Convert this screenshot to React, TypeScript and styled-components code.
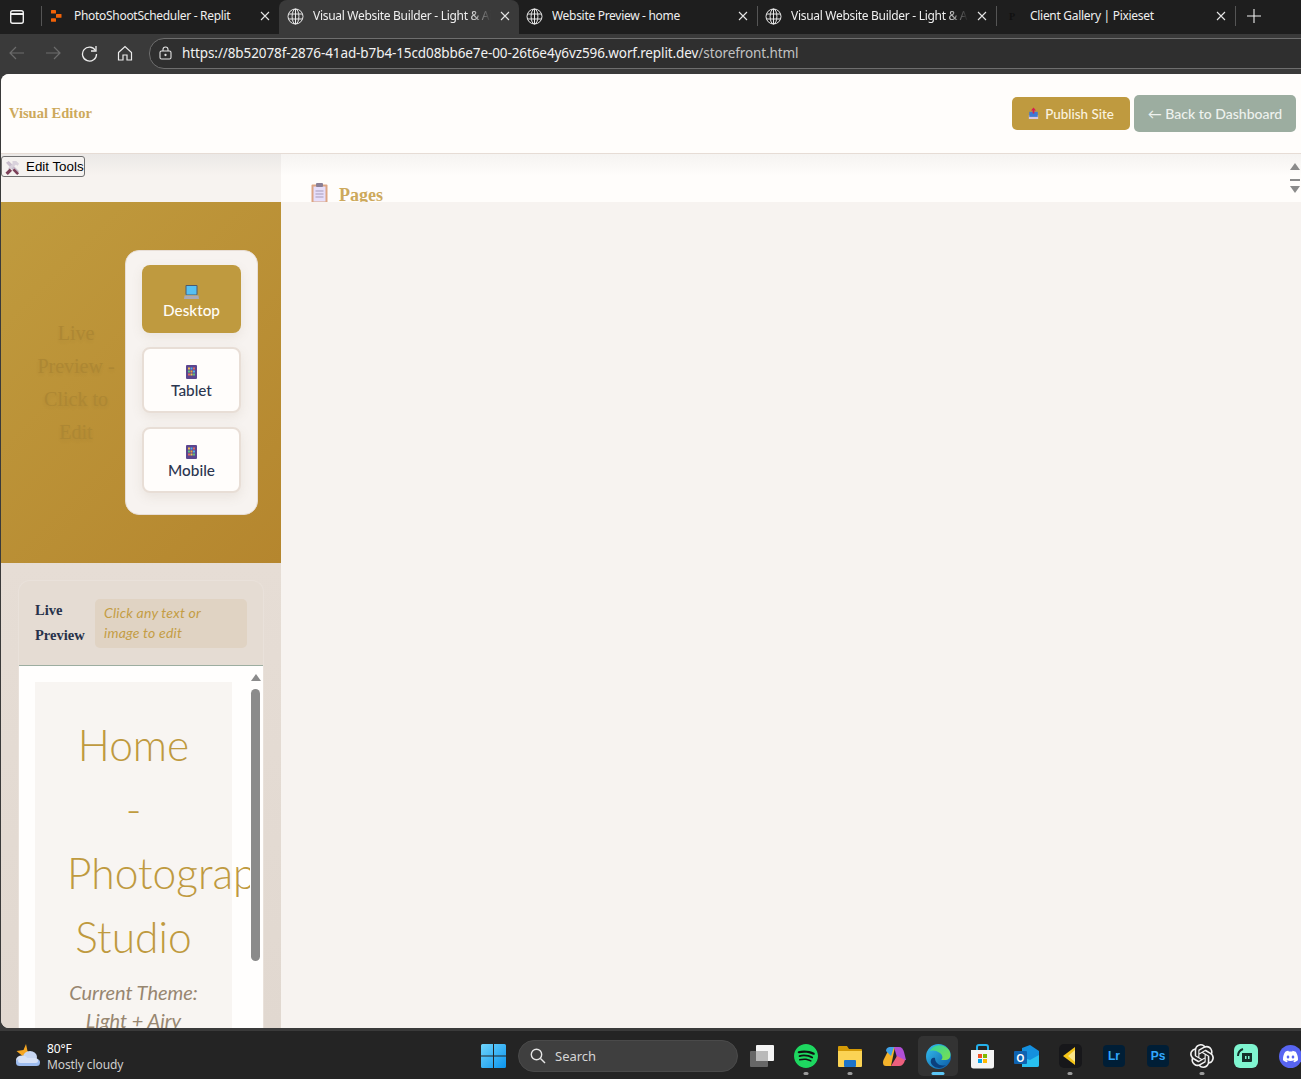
import React from "react";
import styled, { createGlobalStyle } from "styled-components";
import { SiSpotify, SiDiscord, SiOpenai } from "react-icons/si";

const GlobalStyle = createGlobalStyle`
  * { box-sizing: border-box; }
  html, body { margin: 0; padding: 0; height: 100%; overflow: hidden; background: #3a3a3a; }
  body { font-family: "Liberation Sans", Arial, sans-serif; }
`;

const UI_FONT = `"Noto Sans", "Open Sans", sans-serif`;
const SOFT_FONT = `Lato, "Open Sans", sans-serif`;
const SERIF_FONT = `"Liberation Serif", serif`;

const Screen = styled.div`
  width: 1301px;
  height: 1079px;
  display: flex;
  flex-direction: column;
  overflow: hidden;
`;

/* browser chrome */
const TabStrip = styled.div`
  height: 34px;
  background: #1e1e1e;
  display: flex;
  align-items: stretch;
  padding-left: 8px;
  color: #f0f0f0;
  flex-shrink: 0;
`;

const SidebarToggle = styled.div`
  width: 33px;
  display: flex;
  align-items: center;
  justify-content: flex-start;
`;

const TabSep = styled.span<{ $lead?: boolean }>`
  width: 1px;
  height: 20px;
  align-self: center;
  margin: -2px ${(p) => (p.$lead ? -1 : 0)}px 0 0;
  background: #555;
  flex-shrink: 0;
`;

const Tab = styled.div<{ $active?: boolean }>`
  width: ${(p) => (p.$active ? 240 : 238)}px;
  height: 34px;
  padding: 0 9px 2px ${(p) => (p.$active ? 7 : 6)}px;
  display: flex;
  align-items: center;
  gap: 9px;
  flex-shrink: 0;
  border-radius: 8px 8px 0 0;
  background: ${(p) => (p.$active ? "#3a3a3a" : "transparent")};
`;

const TabIcon = styled.span`
  width: 18px;
  height: 18px;
  display: flex;
  align-items: center;
  justify-content: center;
  flex-shrink: 0;
`;

const TabTitle = styled.span<{ $fade?: boolean }>`
  flex: 1;
  min-width: 0;
  font: 400 12px/16px ${UI_FONT};
  letter-spacing: -0.3px;
  white-space: nowrap;
  overflow: hidden;
  color: #efefef;
  ${(p) =>
    p.$fade &&
    `-webkit-mask-image: linear-gradient(90deg, #000 88%, transparent 100%);
     mask-image: linear-gradient(90deg, #000 88%, transparent 100%);`}
`;

const PixiesetMark = styled.span`
  color: #111;
  font: 700 10px ${SERIF_FONT};
`;

const NewTab = styled.div`
  width: 36px;
  padding-bottom: 2px;
  display: flex;
  align-items: center;
  justify-content: center;
`;

const Toolbar = styled.div`
  height: 40px;
  background: #3a3a3a;
  display: flex;
  align-items: center;
  padding: 0 0 2px 0;
  flex-shrink: 0;
`;

const NavSlot = styled.div`
  width: 36px;
  height: 30px;
  margin-left: ${(p) => (p.$first ? -1 : 0)}px;
  display: flex;
  align-items: center;
  justify-content: center;
` as any;

const AddressBar = styled.div`
  flex: 1;
  height: 31px;
  margin: 0 -30px 0 6px;
  border: 1px solid #6e6e6e;
  border-radius: 15px;
  background: #2f2f2f;
  display: flex;
  align-items: center;
  gap: 10px;
  padding-left: 9px;
`;

const Url = styled.span`
  font: 400 13.5px/18px ${UI_FONT};
  letter-spacing: -0.1px;
  color: #f2f2f2;
  white-space: nowrap;
`;

const UrlPath = styled.span`
  color: #c2c2c2;
`;

/* page */
const Page = styled.div`
  height: 954px;
  margin-left: 1px;
  border-radius: 8px 0 0 8px;
  overflow: hidden;
  background: #f7f3f0;
  display: flex;
  flex-direction: column;
  flex-shrink: 0;
`;

const Header = styled.header`
  height: 80px;
  background: #fffdfb;
  border-bottom: 1px solid #e6dcd5;
  display: flex;
  align-items: center;
  justify-content: space-between;
  padding: 0 5px 0 8px;
  flex-shrink: 0;
`;

const Brand = styled.div`
  font: 700 14.5px/20px ${SERIF_FONT};
  color: #cda95c;
  margin-top: -2px;
`;

const HeaderActions = styled.div`
  display: flex;
  align-items: center;
  gap: 4px;
`;

const ActionButton = styled.div<{ $tone: "gold" | "sage" }>`
  height: ${(p) => (p.$tone === "gold" ? 33 : 37)}px;
  width: ${(p) => (p.$tone === "gold" ? 118 : 162)}px;
  border-radius: 5px;
  background: ${(p) => (p.$tone === "gold" ? "#bf9a3f" : "#9cada0")};
  color: ${(p) => (p.$tone === "gold" ? "#fbf3df" : "#eef2ee")};
  font: 500 ${(p) => (p.$tone === "gold" ? 13.4 : 14)}px/18px ${SOFT_FONT};
  display: flex;
  align-items: center;
  justify-content: center;
  gap: 6px;
  white-space: nowrap;
`;

const Workspace = styled.div`
  flex: 1;
  min-height: 0;
  display: flex;
`;

const Sidebar = styled.aside`
  width: 280px;
  display: flex;
  flex-direction: column;
  flex-shrink: 0;
`;

const ToolStrip = styled.div`
  height: 48px;
  flex-shrink: 0;
  padding-top: 2px;
  background: linear-gradient(180deg, #ebe8e6 0%, #f7f3f0 45%);
`;

const ToolButton = styled.div`
  width: 84px;
  height: 21px;
  border: 1px solid #6f6f6f;
  border-radius: 3px;
  background: #f5f2f0;
  color: #000;
  font: 400 13.33px/20px "Liberation Sans", Arial, sans-serif;
  display: flex;
  align-items: center;
  gap: 6px;
  padding: 1px 0 0 3px;
  white-space: nowrap;
`;

const GoldSection = styled.section`
  height: 361px;
  flex-shrink: 0;
  background: linear-gradient(135deg, #c09b3e 0%, #b5862e 100%);
  display: flex;
  align-items: center;
  padding-left: 30px;
`;

const GhostTitle = styled.div`
  width: 90px;
  margin-right: 4px;
  font: 400 20px/33px ${SERIF_FONT};
  text-align: center;
  color: #ad8733;
  text-shadow: 0 2px 4px rgba(0, 0, 0, 0.06);
`;

const DevicePanel = styled.div`
  width: 133px;
  height: 265px;
  padding: 14px 16px 0;
  background: #f7f3f0;
  border: 1px solid #e8ded6;
  border-radius: 14px;
  display: flex;
  flex-direction: column;
  gap: 14px;
`;

const DeviceButton = styled.div<{ $active?: boolean }>`
  height: ${(p) => (p.$active ? 68 : 66)}px;
  padding-top: 4px;
  border-radius: 8px;
  border: ${(p) => (p.$active ? "none" : "2px solid #e8ded6")};
  background: ${(p) => (p.$active ? "#bf9a3f" : "#fffdfb")};
  color: ${(p) => (p.$active ? "#fffdf8" : "#2c3650")};
  box-shadow: 0 4px 12px rgba(120, 100, 70, 0.1);
  font: 500 15.3px/18px ${SOFT_FONT};
  display: flex;
  flex-direction: column;
  align-items: center;
  justify-content: center;
  gap: ${(p) => (p.$active ? 1 : 2)}px;
`;

const PreviewSection = styled.section`
  flex: 1;
  min-height: 0;
  padding: 17px 17px 0;
  background: linear-gradient(180deg, #e6ddd5 0%, #e1d8d0 100%);
`;

const PreviewCard = styled.div`
  height: 100%;
  border-radius: 12px 12px 0 0;
  background: #e5dcd3;
  border: 1px solid #e9e1da;
  border-bottom: none;
  display: flex;
  flex-direction: column;
  overflow: hidden;
`;

const PreviewHeader = styled.div`
  height: 85px;
  flex-shrink: 0;
  border-bottom: 1px solid #9cada0;
  display: flex;
  align-items: flex-start;
  gap: 9px;
  padding: 17px 16px 0 16px;
`;

const PreviewLabel = styled.div`
  width: 51px;
  font: 700 14.5px/25px ${SERIF_FONT};
  color: #27324a;
`;

const PreviewNote = styled.div`
  width: 152px;
  height: 49px;
  margin-top: 1px;
  padding: 4px 30px 0 9px;
  background: #e0d3c3;
  border-radius: 5px;
  font: italic 400 14px/20px ${SOFT_FONT};
  letter-spacing: 0.2px;
  color: #c49d45;
`;

const Viewport = styled.div`
  flex: 1;
  min-height: 0;
  display: flex;
  background: #fffefd;
`;

const ViewportContent = styled.div`
  width: 231px;
  padding: 16px 0 0 16px;
  overflow: hidden;
  flex-shrink: 0;
`;

const Canvas = styled.div`
  width: 197px;
  min-height: 400px;
  padding: 31px 32px 0;
  background: #f8f5f2;
  text-align: center;
`;

const HeroTitle = styled.h1`
  margin: 0 0 9px;
  font: 300 42.5px/64px ${SOFT_FONT};
  color: #bf9a3f;
`;

const ThemeLine = styled.p`
  margin: 0 -20px;
  font: italic 400 20px/28px ${SOFT_FONT};
  color: #978670;
`;

const Scrollbar = styled.div`
  width: 13px;
  padding: 8px 0 0 1px;
  display: flex;
  flex-direction: column;
  align-items: flex-start;
  gap: 8px;
`;

const Thumb = styled.div`
  width: 9px;
  height: 272px;
  border-radius: 5px;
  background: #8b8b8b;
`;

const Main = styled.main`
  flex: 1;
  min-width: 0;
`;

const MainStrip = styled.div`
  height: 48px;
  overflow: hidden;
  background: linear-gradient(180deg, #f5f3f1 0%, #fffdfb 45%);
  display: flex;
  justify-content: space-between;
  padding: 29px 1px 0 30px;
`;

const SectionTitle = styled.h2`
  margin: 0;
  display: flex;
  align-items: flex-start;
  gap: 11px;
  font: 700 18px/24px ${SERIF_FONT};
  color: #cda95c;
`;

const StripScroll = styled.div`
  margin-top: -20px;
  width: 10px;
  height: 30px;
  display: flex;
  flex-direction: column;
  align-items: center;
  justify-content: space-between;
`;

const Dash = styled.span`
  width: 10px;
  height: 2px;
  margin-top: 3px;
  background: #8b8b8b;
`;

/* windows taskbar */
const Taskbar = styled.footer`
  height: 51px;
  padding-top: 2px;
  border-top: 3px solid #3a3a3a;
  background: #242424;
  display: flex;
  align-items: center;
  flex-shrink: 0;
  overflow: hidden;
`;

const Weather = styled.div`
  width: 471px;
  flex-shrink: 0;
  display: flex;
  align-items: center;
  gap: 7px;
  padding-left: 15px;
  color: #fff;
`;

const WeatherText = styled.div`
  padding-top: 2px;
  font: 400 12px/16px ${UI_FONT};
  letter-spacing: -0.1px;
`;

const WeatherSub = styled.small`
  display: block;
  font-size: 12px;
  color: #cfcfcf;
`;

const StartSlot = styled.div`
  width: 47px;
  padding-right: 2px;
  display: flex;
  justify-content: center;
  flex-shrink: 0;
`;

const SearchBox = styled.div`
  width: 220px;
  height: 32px;
  flex-shrink: 0;
  border-radius: 16px;
  background: #3f3f3f;
  border: 1px solid #4a4a4a;
  display: flex;
  align-items: center;
  gap: 9px;
  padding-left: 11px;
  font: 400 13px/16px ${UI_FONT};
  color: #d5d5d5;
`;

const TaskIcons = styled.div`
  display: flex;
  flex-shrink: 0;
  margin-left: 2px;
`;

const TaskIcon = styled.div<{ $active?: boolean }>`
  width: 44px;
  height: 46px;
  display: flex;
  align-items: center;
  justify-content: center;
  position: relative;
  flex-shrink: 0;
  &::before {
    content: "";
    position: absolute;
    left: 2px;
    right: 2px;
    top: 3px;
    bottom: 3px;
    border-radius: 5px;
    background: ${(p) => (p.$active ? "#333" : "transparent")};
  }
  > * { position: relative; }
`;

const RunDot = styled.span<{ $active?: boolean }>`
  position: absolute !important;
  left: 50%;
  bottom: 4px;
  transform: translateX(-50%);
  width: ${(p) => (p.$active ? 13 : 5)}px;
  height: 3px;
  border-radius: 2px;
  background: ${(p) => (p.$active ? "#5cc6f5" : "#9a9a9a")};
`;

const GlobeIcon = () => (
  <svg width="17" height="17" viewBox="0 0 17 17" fill="none" stroke="#e8e8e8" strokeWidth="1">
    <circle cx="8.5" cy="8.5" r="7.5" />
    <ellipse cx="8.5" cy="8.5" rx="3.4" ry="7.5" />
    <path d="M1.5 6h14M1.5 11h14M8.5 1v15" />
  </svg>
);

const CloseIcon = () => (
  <svg width="10" height="10" viewBox="0 0 10 10" stroke="#e5e5e5" strokeWidth="1.1" style={{ flexShrink: 0 }}>
    <path d="M1 1l8 8M9 1l-8 8" />
  </svg>
);

const ReplitIcon = () => (
  <svg width="11" height="12" viewBox="0 0 11 12" fill="#f26207">
    <rect x="0" y="0" width="5" height="3.6" rx="0.6" />
    <rect x="5" y="4" width="5.5" height="3.8" rx="0.6" />
    <rect x="0" y="8.2" width="5" height="3.6" rx="0.6" />
  </svg>
);

const ToolsEmoji = () => (
  <svg width="15" height="15" viewBox="0 0 16 16" style={{ flexShrink: 0 }}>
    <path d="M1 3l3-2 11 11-3 3z" fill="#c8bdcc" />
    <path d="M8 1h4l3 3-1.500 2-2-1L5 11 3 9l5-5z" fill="#d9d2dc" />
    <path d="M5 9l2.500 2.500L3 16l-2.500-2.500z" fill="#7b3f57" />
    <path d="M10 9l5 5-2 2-5-5z" fill="#7b3f57" />
  </svg>
);

const ClipboardEmoji = () => (
  <svg width="17" height="20" viewBox="0 0 17 20" style={{ flexShrink: 0 }}>
    <rect x="0.500" y="1.500" width="16" height="18" rx="1" fill="#dda583" />
    <rect x="2.500" y="3.500" width="12" height="15" fill="#e6defa" />
    <rect x="5" y="0" width="7" height="4" rx="1" fill="#8a7f95" />
    <path d="M4.500 8h8M4.500 11h8M4.500 14h8" stroke="#a79bb8" strokeWidth="1" />
  </svg>
);

const UploadEmoji = () => (
  <svg width="11" height="13" viewBox="0 0 13 14" style={{ flexShrink: 0 }}>
    <rect x="1" y="9" width="11" height="4.500" fill="#d8c8e0" />
    <rect x="1.500" y="5" width="10" height="6" fill="#3f79d4" />
    <path d="M6.500 0l3 3.500H7.500V7h-2V3.500H3.500z" fill="#d81e4f" />
  </svg>
);

const LaptopEmoji = () => (
  <svg width="15" height="16" viewBox="0 0 15 16" style={{ flexShrink: 0 }}>
    <rect x="1.500" y="1" width="12" height="10" rx="1" fill="#4a5a70" />
    <rect x="2.500" y="2" width="10" height="8.500" fill="#56c0f2" />
    <path d="M0.500 11.500h14l.5 3.500H0z" fill="#a8aab8" />
  </svg>
);

const PhoneEmoji = () => (
  <svg width="11" height="14" viewBox="0 0 11 14" style={{ flexShrink: 0 }}>
    <rect width="11" height="14" rx="1" fill="#5b4690" />
    <rect x="2" y="2.500" width="2" height="2" fill="#f2c14e" />
    <rect x="4.500" y="2.500" width="2" height="2" fill="#4fb3e8" />
    <rect x="7" y="2.500" width="2" height="2" fill="#e46a5f" />
    <rect x="2" y="5.500" width="2" height="2" fill="#5fc27e" />
    <rect x="4.500" y="5.500" width="2" height="2" fill="#f2a33c" />
    <rect x="7" y="5.500" width="2" height="2" fill="#4fb3e8" />
    <rect x="2" y="8.500" width="2" height="2" fill="#e46a5f" />
    <rect x="4.500" y="8.500" width="2" height="2" fill="#f2c14e" />
    <rect x="7" y="8.500" width="2" height="2" fill="#5fc27e" />
  </svg>
);

const Arrow = ({ down }: { down?: boolean }) => (
  <svg width="10" height="7" viewBox="0 0 10 7" fill="#8b8b8b" style={{ flexShrink: 0 }}>
    <path d={down ? "M0 0h10L5 7z" : "M5 0l5 7H0z"} />
  </svg>
);

const WeatherIcon = () => (
  <svg width="25" height="26" viewBox="0 0 25 26">
    <path d="M11 1l1.500 7 4 3-9 2-6-5 7-1z" fill="#f5a623" />
    <ellipse cx="15" cy="14" rx="7" ry="6" fill="#c7d6f2" />
    <ellipse cx="7" cy="17" rx="6" ry="4.500" fill="#d7e2f7" />
    <rect x="1" y="16" width="24" height="7" rx="3.500" fill="#9dbcef" />
    <rect x="3" y="15" width="20" height="5" rx="2.500" fill="#d7e2f7" />
  </svg>
);

const WinLogo = () => (
  <svg width="25" height="24" viewBox="0 0 25 24">
    <defs>
      <linearGradient id="win" x1="0" y1="0" x2="1" y2="1">
        <stop offset="0" stopColor="#6fd4fb" />
        <stop offset="1" stopColor="#0a94ee" />
      </linearGradient>
    </defs>
    <path d="M0 1.500A1.500 1.500 0 0 1 1.500 0H12v11.500H0zM13 0h10.500A1.500 1.500 0 0 1 25 1.500v10H13zM0 12.500h12V24H1.500A1.500 1.500 0 0 1 0 22.500zM13 12.500h12v10a1.500 1.500 0 0 1-1.500 1.500H13z" fill="url(#win)" />
  </svg>
);

const TaskView = () => (
  <svg width="24" height="22" viewBox="0 0 24 22">
    <rect x="6" y="0" width="18" height="16" rx="1" fill="#f4f4f4" />
    <rect x="0" y="6" width="18" height="16" rx="1" fill="#6e6e6e" fillOpacity="0.92" />
    <rect x="6" y="6" width="12" height="10" fill="#b9b9b9" />
  </svg>
);

const Folder = () => (
  <svg width="24" height="22" viewBox="0 0 24 22">
    <path d="M0 2a1 1 0 0 1 1-1h8l2 3h12a1 1 0 0 1 1 1v3H0z" fill="#d49a06" />
    <path d="M0 6h24v15a1 1 0 0 1-1 1H1a1 1 0 0 1-1-1z" fill="#fbd354" />
    <rect x="6" y="15" width="12" height="7" rx="1" fill="#1d74c9" />
  </svg>
);

const Copilot = () => (
  <svg width="23" height="23" viewBox="0 0 23 23">
    <path d="M7 2h5L8 21H3C0 21-0.500 18 0.500 15z" fill="#f4b32b" />
    <path d="M3 6C3 3 5 2 7 2h4l-3 9z" fill="#3fa2e8" />
    <path d="M11 2h5c3 0 4 2 5 5l2 8-8 1z" fill="#b04fd6" />
    <path d="M8 21h8c3 0 5-2 6-6l-8-4z" fill="#ec5f7d" />
  </svg>
);

const Edge = () => (
  <svg width="25" height="25" viewBox="0 0 25 25">
    <defs>
      <linearGradient id="edgeA" x1="0" y1="0" x2="1" y2="1">
        <stop offset="0" stopColor="#35c1f1" />
        <stop offset="1" stopColor="#0c59a4" />
      </linearGradient>
      <linearGradient id="edgeB" x1="0" y1="0" x2="1" y2="1">
        <stop offset="0" stopColor="#2fd4a0" />
        <stop offset="1" stopColor="#7fe04a" />
      </linearGradient>
    </defs>
    <circle cx="12.500" cy="12.500" r="12.500" fill="url(#edgeA)" />
    <path d="M4 7C7 0 18-1 23 6c3 5 1 10-3 10h-5c2-1 2-5-1-7-4-3-8-3-10-2z" fill="url(#edgeB)" />
    <path d="M9 14c0 5 5 9 11 7-5 5-13 3-15-2-1-3 1-6 4-5z" fill="#0b3f7d" />
  </svg>
);

const Store = () => (
  <svg width="23" height="25" viewBox="0 0 23 25">
    <path d="M6 6V3a2 2 0 0 1 2-2h7a2 2 0 0 1 2 2v3" fill="none" stroke="#25b0ea" strokeWidth="2" />
    <path d="M0 6h23v16a2.500 2.500 0 0 1-2.500 2.500h-18A2.500 2.500 0 0 1 0 22z" fill="#f4f4f4" />
    <rect x="7" y="10" width="4" height="4" fill="#f25022" />
    <rect x="12" y="10" width="4" height="4" fill="#7fba00" />
    <rect x="7" y="15" width="4" height="4" fill="#00a4ef" />
    <rect x="12" y="15" width="4" height="4" fill="#ffb900" />
  </svg>
);

const OutlookLetter = styled.text`
  font: 700 10px "Liberation Sans", Arial, sans-serif;
  fill: #fff;
`;

const Outlook = () => (
  <svg width="25" height="23" viewBox="0 0 25 23">
    <path d="M8 3l8-3 9 6v14a2 2 0 0 1-2 2H8z" fill="#1490df" />
    <path d="M8 12l8 3 9-5v10a2 2 0 0 1-2 2H8z" fill="#28c0f0" />
    <rect x="0" y="6" width="13" height="13" rx="1" fill="#0f62b0" />
    <OutlookLetter x="2.500" y="16.500">O</OutlookLetter>
  </svg>
);

const Plex = () => (
  <svg width="23" height="24" viewBox="0 0 23 24">
    <rect width="23" height="24" rx="5" fill="#17171a" />
    <path d="M16 3v18L4 12z" fill="#f5c518" />
    <path d="M16 6v12l-7-6z" fill="#fbe58a" />
  </svg>
);

const AppTile = styled.div`
  width: 22px;
  height: 22px;
  border-radius: 4px;
  background: #001e36;
  color: #31a8ff;
  display: flex;
  align-items: center;
  justify-content: center;
  font: 700 12px/1 "Liberation Sans", Arial, sans-serif;
`;

const Twitch = () => (
  <svg width="24" height="24" viewBox="0 0 24 24">
    <rect width="24" height="24" rx="6" fill="#7ff5d0" />
    <path d="M8 9h10v8a1 1 0 0 1-1 1H8z" fill="#14302a" />
    <path d="M4 12c0-4 2-6 5-7" fill="none" stroke="#14302a" strokeWidth="2" />
    <rect x="11" y="12" width="1.500" height="3" fill="#7ff5d0" />
    <rect x="14" y="12" width="1.500" height="3" fill="#7ff5d0" />
  </svg>
);

const DiscordBadge = styled.div`
  width: 23px;
  height: 23px;
  border-radius: 50%;
  background: #5865f2;
  color: #fff;
  display: flex;
  align-items: center;
  justify-content: center;
`;

const SpotifyDisc = styled.div`
  width: 24px;
  height: 24px;
  border-radius: 50%;
  background: #111;
  display: flex;
`;

const tabs = [
  { title: "PhotoShootScheduler - Replit", icon: <ReplitIcon /> },
  { title: "Visual Website Builder - Light & Airy", icon: <GlobeIcon />, active: true, fade: true },
  { title: "Website Preview - home", icon: <GlobeIcon /> },
  { title: "Visual Website Builder - Light & Airy", icon: <GlobeIcon />, fade: true },
  { title: "Client Gallery | Pixieset", icon: <PixiesetMark>P</PixiesetMark> },
];

export default function App(): React.ReactElement {
  return (
    <Screen>
      <GlobalStyle />
      <TabStrip>
        <SidebarToggle>
          <svg width="18" height="18" viewBox="0 0 18 18" fill="none" stroke="#f0f0f0" strokeWidth="1.400">
            <rect x="2.700" y="2.700" width="12.600" height="12.600" rx="2" />
            <path d="M2.700 6h12.600" strokeWidth="2" />
          </svg>
        </SidebarToggle>
        <TabSep $lead />
        {tabs.map((t, i) => (
          <React.Fragment key={i}>
            <Tab $active={t.active}>
              <TabIcon>{t.icon}</TabIcon>
              <TabTitle $fade={t.fade}>{t.title}</TabTitle>
              <CloseIcon />
            </Tab>
            {i >= 2 && <TabSep />}
          </React.Fragment>
        ))}
        <NewTab>
          <svg width="14" height="14" viewBox="0 0 14 14" stroke="#f0f0f0" strokeWidth="1.100">
            <path d="M7 0v14M0 7h14" />
          </svg>
        </NewTab>
      </TabStrip>

      <Toolbar>
        <NavSlot $first>
          <svg width="16" height="14" viewBox="0 0 16 14" fill="none" stroke="#6c6c6c" strokeWidth="1.200">
            <path d="M15 7H1M7 1L1 7l6 6" />
          </svg>
        </NavSlot>
        <NavSlot>
          <svg width="16" height="14" viewBox="0 0 16 14" fill="none" stroke="#6c6c6c" strokeWidth="1.200">
            <path d="M1 7h14M9 1l6 6-6 6" />
          </svg>
        </NavSlot>
        <NavSlot>
          <svg width="17" height="17" viewBox="0 0 17 17" fill="none" stroke="#ececec" strokeWidth="1.300">
            <path d="M14.500 5.500A7 7 0 1 0 15.500 9" />
            <path d="M15 1v5h-5" />
          </svg>
        </NavSlot>
        <NavSlot>
          <svg width="16" height="16" viewBox="0 0 16 16" fill="none" stroke="#ececec" strokeWidth="1.200">
            <path d="M1.500 7.500L8 1.500l6.500 6V15H10v-5H6v5H1.500z" />
          </svg>
        </NavSlot>
        <AddressBar>
          <svg width="13" height="14" viewBox="0 0 13 14" fill="none" stroke="#e2e2e2" strokeWidth="1.100" style={{ flexShrink: 0 }}>
            <rect x="1" y="5" width="11" height="8" rx="1.500" />
            <path d="M4 5V3.500a2.500 2.500 0 0 1 5 0V5" />
            <circle cx="6.500" cy="9" r="0.600" />
          </svg>
          <Url>
            https://8b52078f-2876-41ad-b7b4-15cd08bb6e7e-00-26t6e4y6vz596.worf.replit.dev<UrlPath>/storefront.html</UrlPath>
          </Url>
        </AddressBar>
      </Toolbar>

      <Page>
        <Header>
          <Brand>Visual Editor</Brand>
          <HeaderActions>
            <ActionButton $tone="gold">
              <UploadEmoji />
              Publish Site
            </ActionButton>
            <ActionButton $tone="sage">← Back to Dashboard</ActionButton>
          </HeaderActions>
        </Header>

        <Workspace>
          <Sidebar>
            <ToolStrip>
              <ToolButton>
                <ToolsEmoji />
                Edit Tools
              </ToolButton>
            </ToolStrip>

            <GoldSection>
              <GhostTitle>Live Preview - Click to Edit</GhostTitle>
              <DevicePanel>
                <DeviceButton $active>
                  <LaptopEmoji />
                  Desktop
                </DeviceButton>
                <DeviceButton>
                  <PhoneEmoji />
                  Tablet
                </DeviceButton>
                <DeviceButton>
                  <PhoneEmoji />
                  Mobile
                </DeviceButton>
              </DevicePanel>
            </GoldSection>

            <PreviewSection>
              <PreviewCard>
                <PreviewHeader>
                  <PreviewLabel>Live Preview</PreviewLabel>
                  <PreviewNote>Click any text or image to edit</PreviewNote>
                </PreviewHeader>
                <Viewport>
                  <ViewportContent>
                    <Canvas>
                      <HeroTitle>Home - Photography Studio</HeroTitle>
                      <ThemeLine>Current Theme:</ThemeLine>
                      <ThemeLine>Light + Airy</ThemeLine>
                    </Canvas>
                  </ViewportContent>
                  <Scrollbar>
                    <Arrow />
                    <Thumb />
                  </Scrollbar>
                </Viewport>
              </PreviewCard>
            </PreviewSection>
          </Sidebar>

          <Main>
            <MainStrip>
              <SectionTitle>
                <ClipboardEmoji />
                Pages
              </SectionTitle>
              <StripScroll>
                <Arrow />
                <Dash />
                <Arrow down />
              </StripScroll>
            </MainStrip>
          </Main>
        </Workspace>
      </Page>

      <Taskbar>
        <Weather>
          <WeatherIcon />
          <WeatherText>
            80°F
            <WeatherSub>Mostly cloudy</WeatherSub>
          </WeatherText>
        </Weather>
        <StartSlot>
          <WinLogo />
        </StartSlot>
        <SearchBox>
          <svg width="16" height="16" viewBox="0 0 16 16" fill="none" stroke="#e6e6e6" strokeWidth="1.400">
            <circle cx="6.500" cy="6.500" r="5.200" />
            <path d="M10.500 10.500L15 15" />
          </svg>
          Search
        </SearchBox>
        <TaskIcons>
          <TaskIcon><TaskView /></TaskIcon>
          <TaskIcon>
            <SpotifyDisc>
              <SiSpotify size={24} color="#1ed760" />
            </SpotifyDisc>
            <RunDot />
          </TaskIcon>
          <TaskIcon>
            <Folder />
            <RunDot />
          </TaskIcon>
          <TaskIcon><Copilot /></TaskIcon>
          <TaskIcon $active>
            <Edge />
            <RunDot $active />
          </TaskIcon>
          <TaskIcon><Store /></TaskIcon>
          <TaskIcon><Outlook /></TaskIcon>
          <TaskIcon>
            <Plex />
            <RunDot />
          </TaskIcon>
          <TaskIcon><AppTile>Lr</AppTile></TaskIcon>
          <TaskIcon><AppTile>Ps</AppTile></TaskIcon>
          <TaskIcon>
            <SiOpenai size={24} color="#f2f2f2" />
            <RunDot />
          </TaskIcon>
          <TaskIcon><Twitch /></TaskIcon>
          <TaskIcon>
            <DiscordBadge>
              <SiDiscord size={15} />
            </DiscordBadge>
          </TaskIcon>
        </TaskIcons>
      </Taskbar>
    </Screen>
  );
}
